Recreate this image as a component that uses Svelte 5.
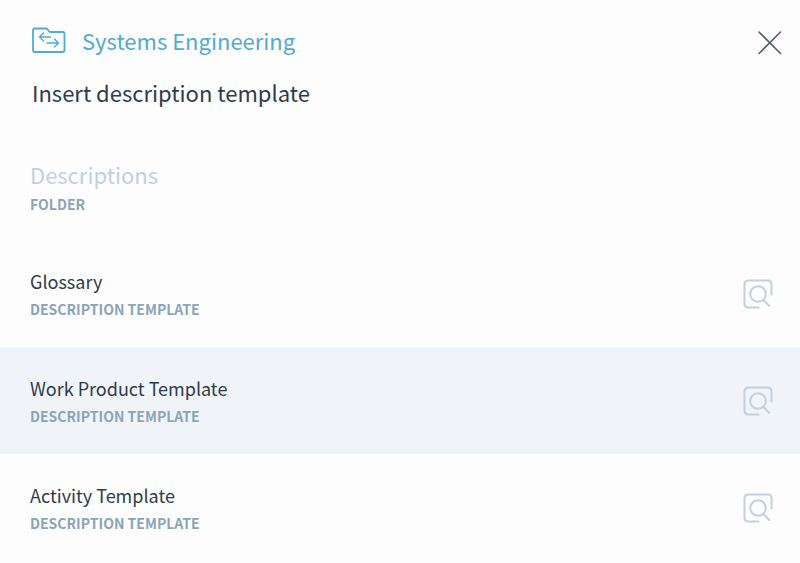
<script>
    import { createEventDispatcher } from 'svelte';

    const dispatch = createEventDispatcher();

    export let project = 'Systems Engineering';
    export let folder = 'Descriptions';
    export let templates = ['Glossary', 'Work Product Template', 'Activity Template'];

    let active = 'Work Product Template';

    function select(name) {
        active = name;
        dispatch('select', name);
    }
</script>

<main>
    <header>
        <div class="top">
            <div class="project">
                <svg width="34" height="26" viewBox="0 0 34 26" aria-hidden="true">
                    <path d="M3 1.500h11q1 0 1.500.8l1.200 1.800q.5.900 1.500.900H30.500q2 0 2 2V23q0 2-2 2H3q-2 0-2-2V3.500q0-2 2-2z" stroke-width="1.800" />
                    <path d="M18.500 10H7.500M11.500 6l-4 4 4 4M15 16h11.500M22.500 12l4 4-4 4" stroke-width="1.400" />
                </svg>
                <span>{project}</span>
            </div>
            <button class="close" aria-label="Close" on:click={() => dispatch('close')}>
                <svg width="24" height="24" viewBox="0 0 24 24">
                    <path d="M1 1l21.500 21.500M22.500 1L1 22.500" stroke-width="1.600" />
                </svg>
            </button>
        </div>
        <h1>Insert description template</h1>
    </header>

    <section class="folder">
        <h2>{folder}</h2>
        <span class="kind">Folder</span>
    </section>

    <ul>
        {#each templates as name}
            <li class:active={name === active}>
                <button class="template" on:click={() => select(name)}>
                    <span class="name">{name}</span>
                    <span class="kind">Description template</span>
                </button>
                <button class="preview" aria-label="Preview {name}" on:click={() => dispatch('preview', name)}>
                    <svg width="30" height="30" viewBox="0 0 30 30">
                        <path d="M15.500 28.500H5.500q-4 0-4-4V5.500q0-4 4-4h19q4 0 4 4v10" stroke-width="2" />
                        <circle cx="15" cy="15" r="7.800" stroke-width="2" />
                        <path d="M20.500 21l5.800 6" stroke-width="2" />
                    </svg>
                </button>
            </li>
        {/each}
    </ul>
</main>

<style>
    :global(body) {
        margin: 0;
        background-color: #fdfdfe;
    }

    main {
        color: #2f3b4b;
        font-family: "Noto Sans CJK SC", "Noto Sans", sans-serif;
    }

    svg {
        display: block;
        flex: none;
        fill: none;
        stroke: currentColor;
        stroke-linecap: round;
        stroke-linejoin: round;
    }

    button {
        padding: 0;
        border: 0;
        background: none;
        color: inherit;
        font: inherit;
        text-align: left;
        cursor: pointer;
    }

    header {
        padding: 24px 18px 0 32px;
    }

    .top {
        display: flex;
        align-items: center;
        justify-content: space-between;
    }

    .project {
        display: flex;
        align-items: center;
        gap: 16px;
        color: #50abd2;
        font-size: 22px;
        line-height: 32px;
    }

    .close {
        margin-top: 6px;
        color: #535e6d;
    }

    h1,
    h2 {
        margin: 0;
        font-size: 22px;
        font-weight: 400;
        line-height: 32px;
    }

    h1 {
        margin-top: 20px;
    }

    .folder {
        padding: 50px 30px 24px;
    }

    h2 {
        margin-bottom: 2px;
        color: #c3cfdd;
    }

    .kind {
        display: block;
        color: #8aa4b8;
        font-size: 14px;
        font-weight: 700;
        line-height: 24px;
        text-transform: uppercase;
    }

    ul {
        margin: 0;
        padding: 0;
        list-style: none;
    }

    li {
        display: flex;
        align-items: center;
        padding: 0 27px 0 30px;
    }

    li.active {
        background-color: #f0f4f9;
    }

    .template {
        flex: 1;
        padding: 25px 0 26px;
    }

    .name {
        display: block;
        font-size: 18px;
        line-height: 32px;
    }

    .preview {
        color: #c3d0df;
    }
</style>
